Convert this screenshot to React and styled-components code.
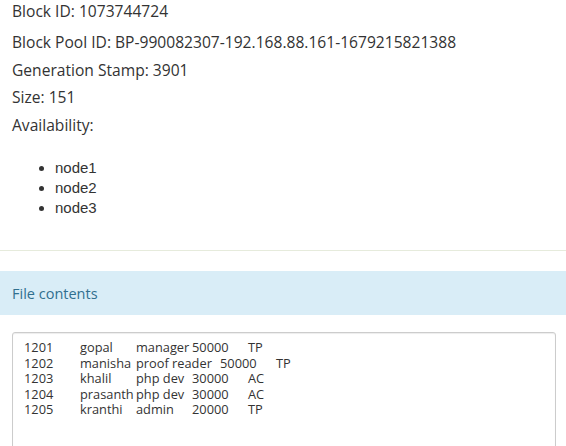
import React from 'react';
import styled, { createGlobalStyle } from 'styled-components';

const GlobalStyle = createGlobalStyle`
    html, body {
        margin : 0;
        padding : 0;
        overflow : hidden;
        background : #ffffff;
    }
    body {
        font-family : 'Open Sans', 'Liberation Sans', sans-serif;
        color : #333333;
    }
`;

const Page = styled.div`
    display : flex;
    flex-direction : column;
    width : 566px;
    height : 446px;
    overflow : hidden;
`;

const InfoBox = styled.div`
    display : flex;
    flex-direction : column;
    flex-shrink : 0;
    padding : 2px 12px 32px 12px;
    border-bottom : 1px solid #e6ebdc;
`;

const InfoText = styled.p`
    margin : 0 0 ${props => props.$first ? '13px' : '9.5px'} 0;
    line-height : 18px;
    font-size : 15.6px;
`;

const NodeList = styled.ul`
    margin : 15px 0 0 0;
    padding-left : 43px;
    font-family : 'Liberation Sans', Arial, sans-serif;
    font-size : 15px;
    line-height : 20px;
`;

const PanelHeading = styled.div`
    display : flex;
    align-items : center;
    flex-shrink : 0;
    height : 44px;
    margin-top : 20px;
    padding : 0 12px;
    background : #d9edf7;
    color : #31708f;
    font-size : 14.5px;
`;

const ContentArea = styled.textarea`
    display : block;
    flex-shrink : 0;
    box-sizing : border-box;
    margin : 17px 10px 0 12px;
    width : 544px;
    height : 130px;
    padding : 7px 11px;
    border : 1px solid #cccccc;
    border-radius : 3px;
    box-shadow : inset 0 1px 1px rgba(0, 0, 0, 0.075);
    font-family : 'Open Sans', 'Liberation Sans', sans-serif;
    font-size : 12.8px;
    line-height : 15.5px;
    color : #333333;
    tab-size : 28px;
    -moz-tab-size : 28px;
    resize : none;
    overflow : hidden;
    outline : none;
`;

const blockInfo = [
    'Block ID: 1073744724',
    'Block Pool ID: BP-990082307-192.168.88.161-1679215821388',
    'Generation Stamp: 3901',
    'Size: 151',
    'Availability:'
];

const nodes = ['node1', 'node2', 'node3'];

const fileContents = [
    '1201\tgopal\tmanager\t50000\tTP',
    '1202\tmanisha\tproof reader\t50000\tTP',
    '1203\tkhalil\tphp dev\t30000\tAC',
    '1204\tprasanth\tphp dev\t30000\tAC',
    '1205\tkranthi\tadmin\t20000\tTP'
].join('\n');

class App extends React.Component{
    render(){
        return(
            <Page>
                <GlobalStyle />
                <InfoBox>
                    {
                        blockInfo.map((line, i) => (
                            <InfoText key = {i} $first = {i === 0}>{line}</InfoText>
                        ))
                    }
                    <NodeList>
                        {
                            nodes.map((node) => (
                                <li key = {node}>{node}</li>
                            ))
                        }
                    </NodeList>
                </InfoBox>
                <PanelHeading>File contents</PanelHeading>
                <ContentArea readOnly defaultValue = {fileContents} />
            </Page>
        );
    }
}

export default App;
